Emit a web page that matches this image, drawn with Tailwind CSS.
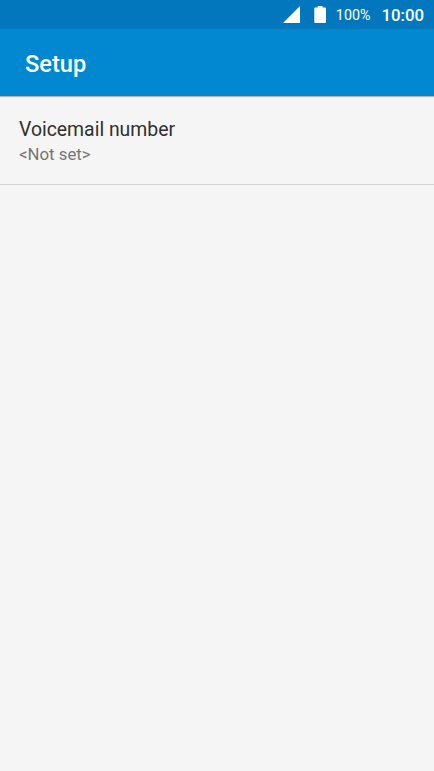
<!DOCTYPE html>
<html lang="en">

<head>
    <meta charset="UTF-8">
    <meta name="viewport" content="width=device-width, initial-scale=1.0">
    <title>Setup</title>
    <script src="https://cdn.jsdelivr.net/npm/@tailwindcss/browser@4"></script>
</head>

<body class="flex flex-col h-screen overflow-hidden bg-[#f5f5f5] font-[Roboto,sans-serif]">
    <!-- Status bar -->
    <div class="flex items-center justify-end h-[29px] shrink-0 bg-[#0277bd] text-white pr-[10px] pt-px">
        <svg class="w-[17px] h-[18px] mr-[14px]" viewBox="0 0 17 18" fill="currentColor">
            <path d="M0 17 17 0v17z"/>
        </svg>
        <svg class="w-3 h-[18px] mr-[10px]" viewBox="0 0 12 18" fill="currentColor">
            <path d="M3.700 0h4.900v1.500H11q1 0 1 1v13.500q0 1-1 1H1.300q-1 0-1-1v-13.500q0-1 1-1h2.400z"/>
        </svg>
        <span class="text-[14.3px] leading-none mr-[11px] pt-px">100%</span>
        <span class="text-[16.8px] leading-none font-medium">10:00</span>
    </div>

    <!-- App bar -->
    <header class="flex items-center h-[67px] shrink-0 bg-[#0288d1] text-white pl-[25px] pt-[5px] shadow-[0_1px_1px_rgba(0,0,0,0.25)]">
        <h1 class="text-[23.6px] leading-none font-medium">Setup</h1>
    </header>

    <main>
        <div class="h-[89px] pl-[19px] pt-[22px] border-b border-[#d3d3d3]">
            <p class="text-[19.4px] leading-6 text-[#303030]">Voicemail number</p>
            <p class="text-[16.8px] leading-6 text-[#757575]">&lt;Not set&gt;</p>
        </div>
    </main>
</body>

</html>
